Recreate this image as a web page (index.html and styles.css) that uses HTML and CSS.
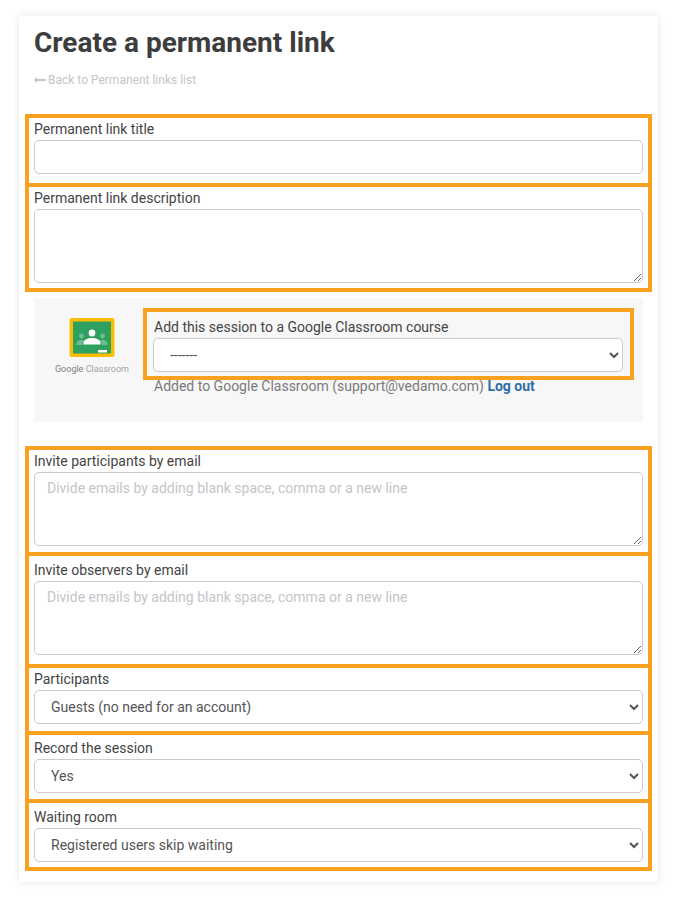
FILE: index.html
```html
<!DOCTYPE html>
<html>
<head>
  <meta charset="UTF-8">
  <title>Create a permanent link</title>
  <link rel="stylesheet" href="styles.css">
</head>
<body>
  <div class="card">
    <h1>Create a permanent link</h1>
    <a class="back-link" href="#">
      <svg class="back-arrow" width="12" height="6" viewBox="0 0 12 6"><path d="M0 3l3-3v2h9v2H3v2z" fill="#c4c5ca"/></svg>
      Back to Permanent links list
    </a>

    <form class="link-form">
      <div class="form-group mark-title">
        <label>Permanent link title</label>
        <input type="text" class="form-control">
      </div>
      <div class="form-group mark-description">
        <label>Permanent link description</label>
        <textarea class="form-control"></textarea>
      </div>

      <div class="classroom-box">
        <div class="classroom-logo">
          <svg width="46" height="40" viewBox="0 0 46 40">
            <rect x="0.5" y="0" width="45" height="39" rx="2.5" fill="#fbbc04"/>
            <rect x="4" y="3.5" width="38" height="32" fill="#2ea05f"/>
            <circle cx="12.5" cy="18" r="2.4" fill="#6fbd8f"/>
            <circle cx="33.5" cy="18" r="2.4" fill="#6fbd8f"/>
            <path d="M7.5 27v-1.5c0-2 2.6-3.6 5-3.6 1 0 2 .2 2.8.6-1.2 1-1.8 2.4-1.8 4.5z" fill="#6fbd8f"/>
            <path d="M38.5 27v-1.5c0-2-2.6-3.6-5-3.6-1 0-2 .2-2.8.6 1.2 1 1.8 2.4 1.8 4.5z" fill="#6fbd8f"/>
            <circle cx="23" cy="15" r="3.4" fill="#ffffff"/>
            <path d="M14.5 26.500v-1.800c0-3 4.600-4.800 8.500-4.800s8.500 1.800 8.500 4.800v1.800z" fill="#ffffff"/>
            <rect x="29" y="32" width="9" height="2.500" fill="#ffffff"/>
          </svg>
          <div class="classroom-name"><span class="classroom-google">Google</span> Classroom</div>
        </div>
        <div class="classroom-fields">
          <div class="form-group mark-course">
            <label>Add this session to a Google Classroom course</label>
            <select class="form-control">
              <option>-------</option>
            </select>
          </div>
          <div class="classroom-note">Added to Google Classroom (support@vedamo.com) <a href="#">Log out</a></div>
        </div>
      </div>

      <div class="form-group mark-participants">
        <label>Invite participants by email</label>
        <textarea class="form-control" placeholder="Divide emails by adding blank space, comma or a new line"></textarea>
      </div>
      <div class="form-group mark-observers">
        <label>Invite observers by email</label>
        <textarea class="form-control" placeholder="Divide emails by adding blank space, comma or a new line"></textarea>
      </div>
      <div class="form-group mark-type">
        <label>Participants</label>
        <select class="form-control">
          <option>Guests (no need for an account)</option>
        </select>
      </div>
      <div class="form-group mark-record">
        <label>Record the session</label>
        <select class="form-control">
          <option>Yes</option>
        </select>
      </div>
      <div class="form-group mark-waiting">
        <label>Waiting room</label>
        <select class="form-control">
          <option>Registered users skip waiting</option>
        </select>
      </div>
    </form>
  </div>
</body>
</html>
```

FILE: styles.css
```css
body {
  font-family: Roboto, Arial, sans-serif;
  font-size: 14px;
  background: #ffffff;
  margin: 0;
  padding: 16px 19px;
  color: #444444;
}

.card {
  background: #ffffff;
  box-shadow: 0 0 8px rgba(0, 0, 0, 0.1);
  padding: 9px 15px 11px 15px;
  height: 846px;
}

h1 {
  font-size: 28px;
  font-weight: 700;
  line-height: 36px;
  margin: 0 0 9px 0;
  color: #3d3d3d;
}

.back-link {
  display: block;
  font-size: 12px;
  line-height: 20px;
  color: #c4c5ca;
  text-decoration: none;
}

.back-arrow {
  vertical-align: 1px;
  margin-right: -1px;
}

.link-form {
  margin-top: 25px;
}

/* Form rows */
.form-group {
  position: relative;
  margin-bottom: 10px;
}

.form-group label {
  display: block;
  box-sizing: border-box;
  height: 25px;
  padding-top: 4px;
  line-height: 20px;
}

.form-control {
  display: block;
  box-sizing: border-box;
  width: 100%;
  border: 1px solid #cccccc;
  border-radius: 5px;
  background: #ffffff;
  font-family: Roboto, Arial, sans-serif;
  font-size: 14px;
  color: #555555;
  margin: 0;
}

input.form-control,
select.form-control {
  height: 34px;
}

input.form-control {
  padding: 0 12px;
}

select.form-control {
  padding: 0 12px;
}

textarea.form-control {
  height: 74px;
  padding: 7px 12px;
  resize: vertical;
}

textarea.form-control::placeholder {
  color: #c4c5ca;
  opacity: 1;
}

/* Orange marks over the rows */
.form-group::after {
  content: "";
  position: absolute;
  left: -9px;
  right: -9px;
  top: var(--mark-top, 0);
  bottom: var(--mark-bottom, 0);
  border: 4px solid #faa21f;
  pointer-events: none;
}

.mark-title { --mark-top: -1px; --mark-bottom: -13px; }
.mark-description { --mark-top: -1px; --mark-bottom: -9px; }
.mark-participants { --mark-top: -1px; --mark-bottom: -10px; }
.mark-observers { --mark-top: -4px; --mark-bottom: -13px; }
.mark-type { --mark-top: -1px; --mark-bottom: -11px; }
.mark-record { --mark-top: -3px; --mark-bottom: -10px; }
.mark-waiting { --mark-top: -4px; --mark-bottom: -9px; }
.mark-course { --mark-top: -5px; --mark-bottom: -8px; }

.mark-course::after {
  right: -11px;
  left: -10px;
}

/* Google Classroom */
.classroom-box {
  display: flex;
  background: #f7f7f7;
  height: 124px;
  box-sizing: border-box;
  padding: 15px 20px 0 0;
  margin: 15px 0 25px 0;
}

.classroom-logo {
  width: 116px;
  margin-right: 3px;
  flex: none;
  display: flex;
  flex-direction: column;
  align-items: center;
  padding-top: 5px;
}

.classroom-logo svg {
  display: block;
}

.classroom-name {
  font-size: 9px;
  line-height: 12px;
  margin-top: 5px;
  color: #a3a3a3;
  white-space: nowrap;
}

.classroom-google {
  color: #808080;
}

.classroom-fields {
  flex: 1;
}

.classroom-fields .form-group {
  margin-bottom: 4px;
}

.classroom-fields label {
  padding-left: 1px;
}

.classroom-note {
  padding-left: 1px;
  line-height: 20px;
  color: #7a7a7a;
}

.classroom-note a {
  color: #2f6da8;
  font-weight: 700;
  text-decoration: none;
}
```
